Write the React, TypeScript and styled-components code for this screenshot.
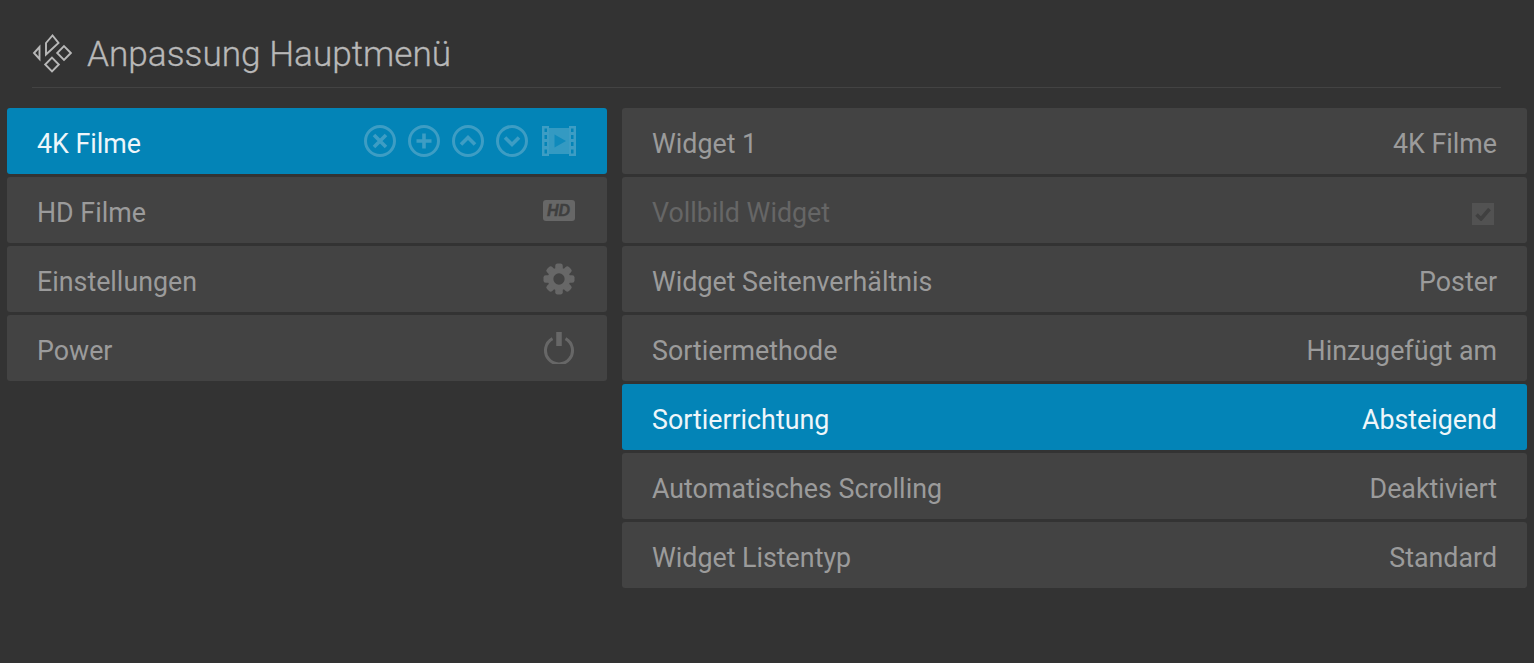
import React from "react";
import styled, { createGlobalStyle } from "styled-components";

const GlobalStyle = createGlobalStyle`
  html, body {
    margin: 0;
    height: 100%;
    background: #333333;
  }
  body {
    font-family: Roboto, "Liberation Sans", sans-serif;
    overflow: hidden;
  }
`;

const Page = styled.div`
  width: 1534px;
  height: 663px;
  background: #333333;
  box-sizing: border-box;
  padding: 0 7px;
  display: flex;
  flex-direction: column;
`;

const Header = styled.header`
  height: 88px;
  margin: 0 26px 20px 25px;
  border-bottom: 1px solid #434343;
  display: flex;
  align-items: center;
  gap: 15px;
  padding-top: 19px;
  box-sizing: border-box;
`;

const Title = styled.h1`
  margin: 1px 0 0;
  font-size: 35.2px;
  font-weight: 300;
  color: #b8b8b8;
  line-height: 40px;
  -webkit-text-stroke: 0.3px #b8b8b8;
`;

const Columns = styled.div`
  display: flex;
  gap: 15px;
`;

const Column = styled.div<{ $width: number }>`
  width: ${(p) => p.$width}px;
  display: flex;
  flex-direction: column;
  gap: 3px;
`;

const Row = styled.div<{ $active?: boolean }>`
  height: 66px;
  box-sizing: border-box;
  padding: 0 30px;
  border-radius: 3px;
  display: flex;
  align-items: center;
  justify-content: space-between;
  font-size: 26.8px;
  background: ${(p) => (p.$active ? "#0384b7" : "#434343")};
  color: ${(p) => (p.$active ? "#eef6fa" : "#9b9b9b")};
`;

const RowText = styled.span<{ $muted?: boolean }>`
  padding-top: 6px;
  ${(p) => p.$muted && "color: #666666;"}
`;

const IconRow = styled.div`
  display: flex;
  align-items: center;
  gap: 12px;
  margin-right: 1px;
  color: #3d9dc4;
`;

const FilmWrap = styled.div`
  display: flex;
  margin-left: 2px;
`;

const RowIcon = styled.div`
  display: flex;
  margin-right: 2px;
  color: #676767;
`;

const CheckBox = styled.div`
  width: 22px;
  height: 22px;
  margin: 8px 3px 0 0;
  background: #525252;
  display: flex;
  align-items: center;
  justify-content: center;
  color: #404040;
`;

const KodiLogo = () => (
  <svg width="40" height="40" viewBox="0 0 40 40" fill="none" stroke="#b8b8b8" strokeWidth="1.9">
    <path d="M7.5 14 L2 20 L7.5 26 Z" />
    <path d="M14 21.5 V10 L20.5 2.5 L26.5 10 Z" />
    <path d="M32 13.2 L38.8 20 L32 26.8 L25.2 20 Z" />
    <path d="M20 24.7 L26.8 31.5 L20 38.3 L13.2 31.5 Z" />
  </svg>
);

const CircleIcon = ({ d }: { d: string }) => (
  <svg width="32" height="32" viewBox="0 0 32 32" fill="none" stroke="currentColor" strokeWidth="3">
    <circle cx="16" cy="16" r="14.5" />
    <path d={d} strokeWidth="3.6" />
  </svg>
);

const FilmIcon = () => (
  <svg width="34" height="30" viewBox="0 0 34 30" fill="currentColor">
    <path
      fillRule="evenodd"
      d="M0 0H7V30H0Z M27 0H34V30H27Z M2.5 2.5V6H5V2.5Z M2.5 9V13H5V9Z M2.5 16V20H5V16Z M2.5 23.5V27.5H5V23.5Z M29 2.5V6H31.5V2.5Z M29 9V13H31.5V9Z M29 16V20H31.5V16Z M29 23.5V27.5H31.5V23.5Z"
    />
    <rect x="7" y="2" width="20" height="26" opacity="0.85" />
    <path d="M12.5 8.5 L24 15 L12.5 21.5 Z" fill="#0f8abb" />
  </svg>
);

const HdIcon = () => (
  <svg width="32" height="21" viewBox="0 0 32 21">
    <rect width="32" height="21" rx="3" fill="#676767" />
    <text
      x="15.5"
      y="16"
      textAnchor="middle"
      fontFamily="Liberation Sans, sans-serif"
      fontWeight="700"
      fontStyle="italic"
      fontSize="16"
      stroke="#3f3f3f"
      strokeWidth="0.4"
      fill="#3f3f3f"
    >
      HD
    </text>
  </svg>
);

const GearIcon = () => {
  const teeth = [0, 45, 90, 135, 180, 225, 270, 315];
  return (
    <svg width="32" height="32" viewBox="0 0 34 34" fill="currentColor">
      {teeth.map((a) => (
        <rect key={a} x="13" y="0.5" width="8" height="8" rx="2.5" transform={`rotate(${a} 17 17)`} />
      ))}
      <path
        fillRule="evenodd"
        d="M17 5a12 12 0 1 0 0 24a12 12 0 1 0 0-24Z M17 11a6 6 0 1 1 0 12a6 6 0 1 1 0-12Z"
      />
    </svg>
  );
};

const PowerIcon = () => (
  <svg width="32" height="32" viewBox="0 0 32 32" fill="none" stroke="currentColor" strokeWidth="3">
    <path d="M9.5 6.6 A13.5 13.5 0 1 0 22.5 6.6" />
    <path d="M16 0 V14" strokeWidth="5.5" />
  </svg>
);

const settings = [
  { label: "Widget 1", value: "4K Filme" },
  { label: "Vollbild Widget", check: true },
  { label: "Widget Seitenverhältnis", value: "Poster" },
  { label: "Sortiermethode", value: "Hinzugefügt am" },
  { label: "Sortierrichtung", value: "Absteigend", active: true },
  { label: "Automatisches Scrolling", value: "Deaktiviert" },
  { label: "Widget Listentyp", value: "Standard" },
];

export default function App() {
  return (
    <Page>
      <GlobalStyle />
      <Header>
        <KodiLogo />
        <Title>Anpassung Hauptmenü</Title>
      </Header>
      <Columns>
        <Column $width={600}>
          <Row $active>
            <RowText>4K Filme</RowText>
            <IconRow>
              <CircleIcon d="M10 10 L22 22 M22 10 L10 22" />
              <CircleIcon d="M16 8.5 V23.5 M8.5 16 H23.5" />
              <CircleIcon d="M9 19.5 L16 12.5 L23 19.5" />
              <CircleIcon d="M9 12.5 L16 19.5 L23 12.5" />
              <FilmWrap><FilmIcon /></FilmWrap>
            </IconRow>
          </Row>
          <Row>
            <RowText>HD Filme</RowText>
            <RowIcon><HdIcon /></RowIcon>
          </Row>
          <Row>
            <RowText>Einstellungen</RowText>
            <RowIcon><GearIcon /></RowIcon>
          </Row>
          <Row>
            <RowText>Power</RowText>
            <RowIcon><PowerIcon /></RowIcon>
          </Row>
        </Column>
        <Column $width={905}>
          {settings.map((s) => (
            <Row key={s.label} $active={s.active}>
              <RowText $muted={s.check}>{s.label}</RowText>
              {s.check ? (
                <CheckBox>
                  <svg width="16" height="14" viewBox="0 0 16 14" fill="none" stroke="currentColor" strokeWidth="3.6">
                    <path d="M1.5 7.5 L6 12 L14.5 2" />
                  </svg>
                </CheckBox>
              ) : (
                <RowText>{s.value}</RowText>
              )}
            </Row>
          ))}
        </Column>
      </Columns>
    </Page>
  );
}
